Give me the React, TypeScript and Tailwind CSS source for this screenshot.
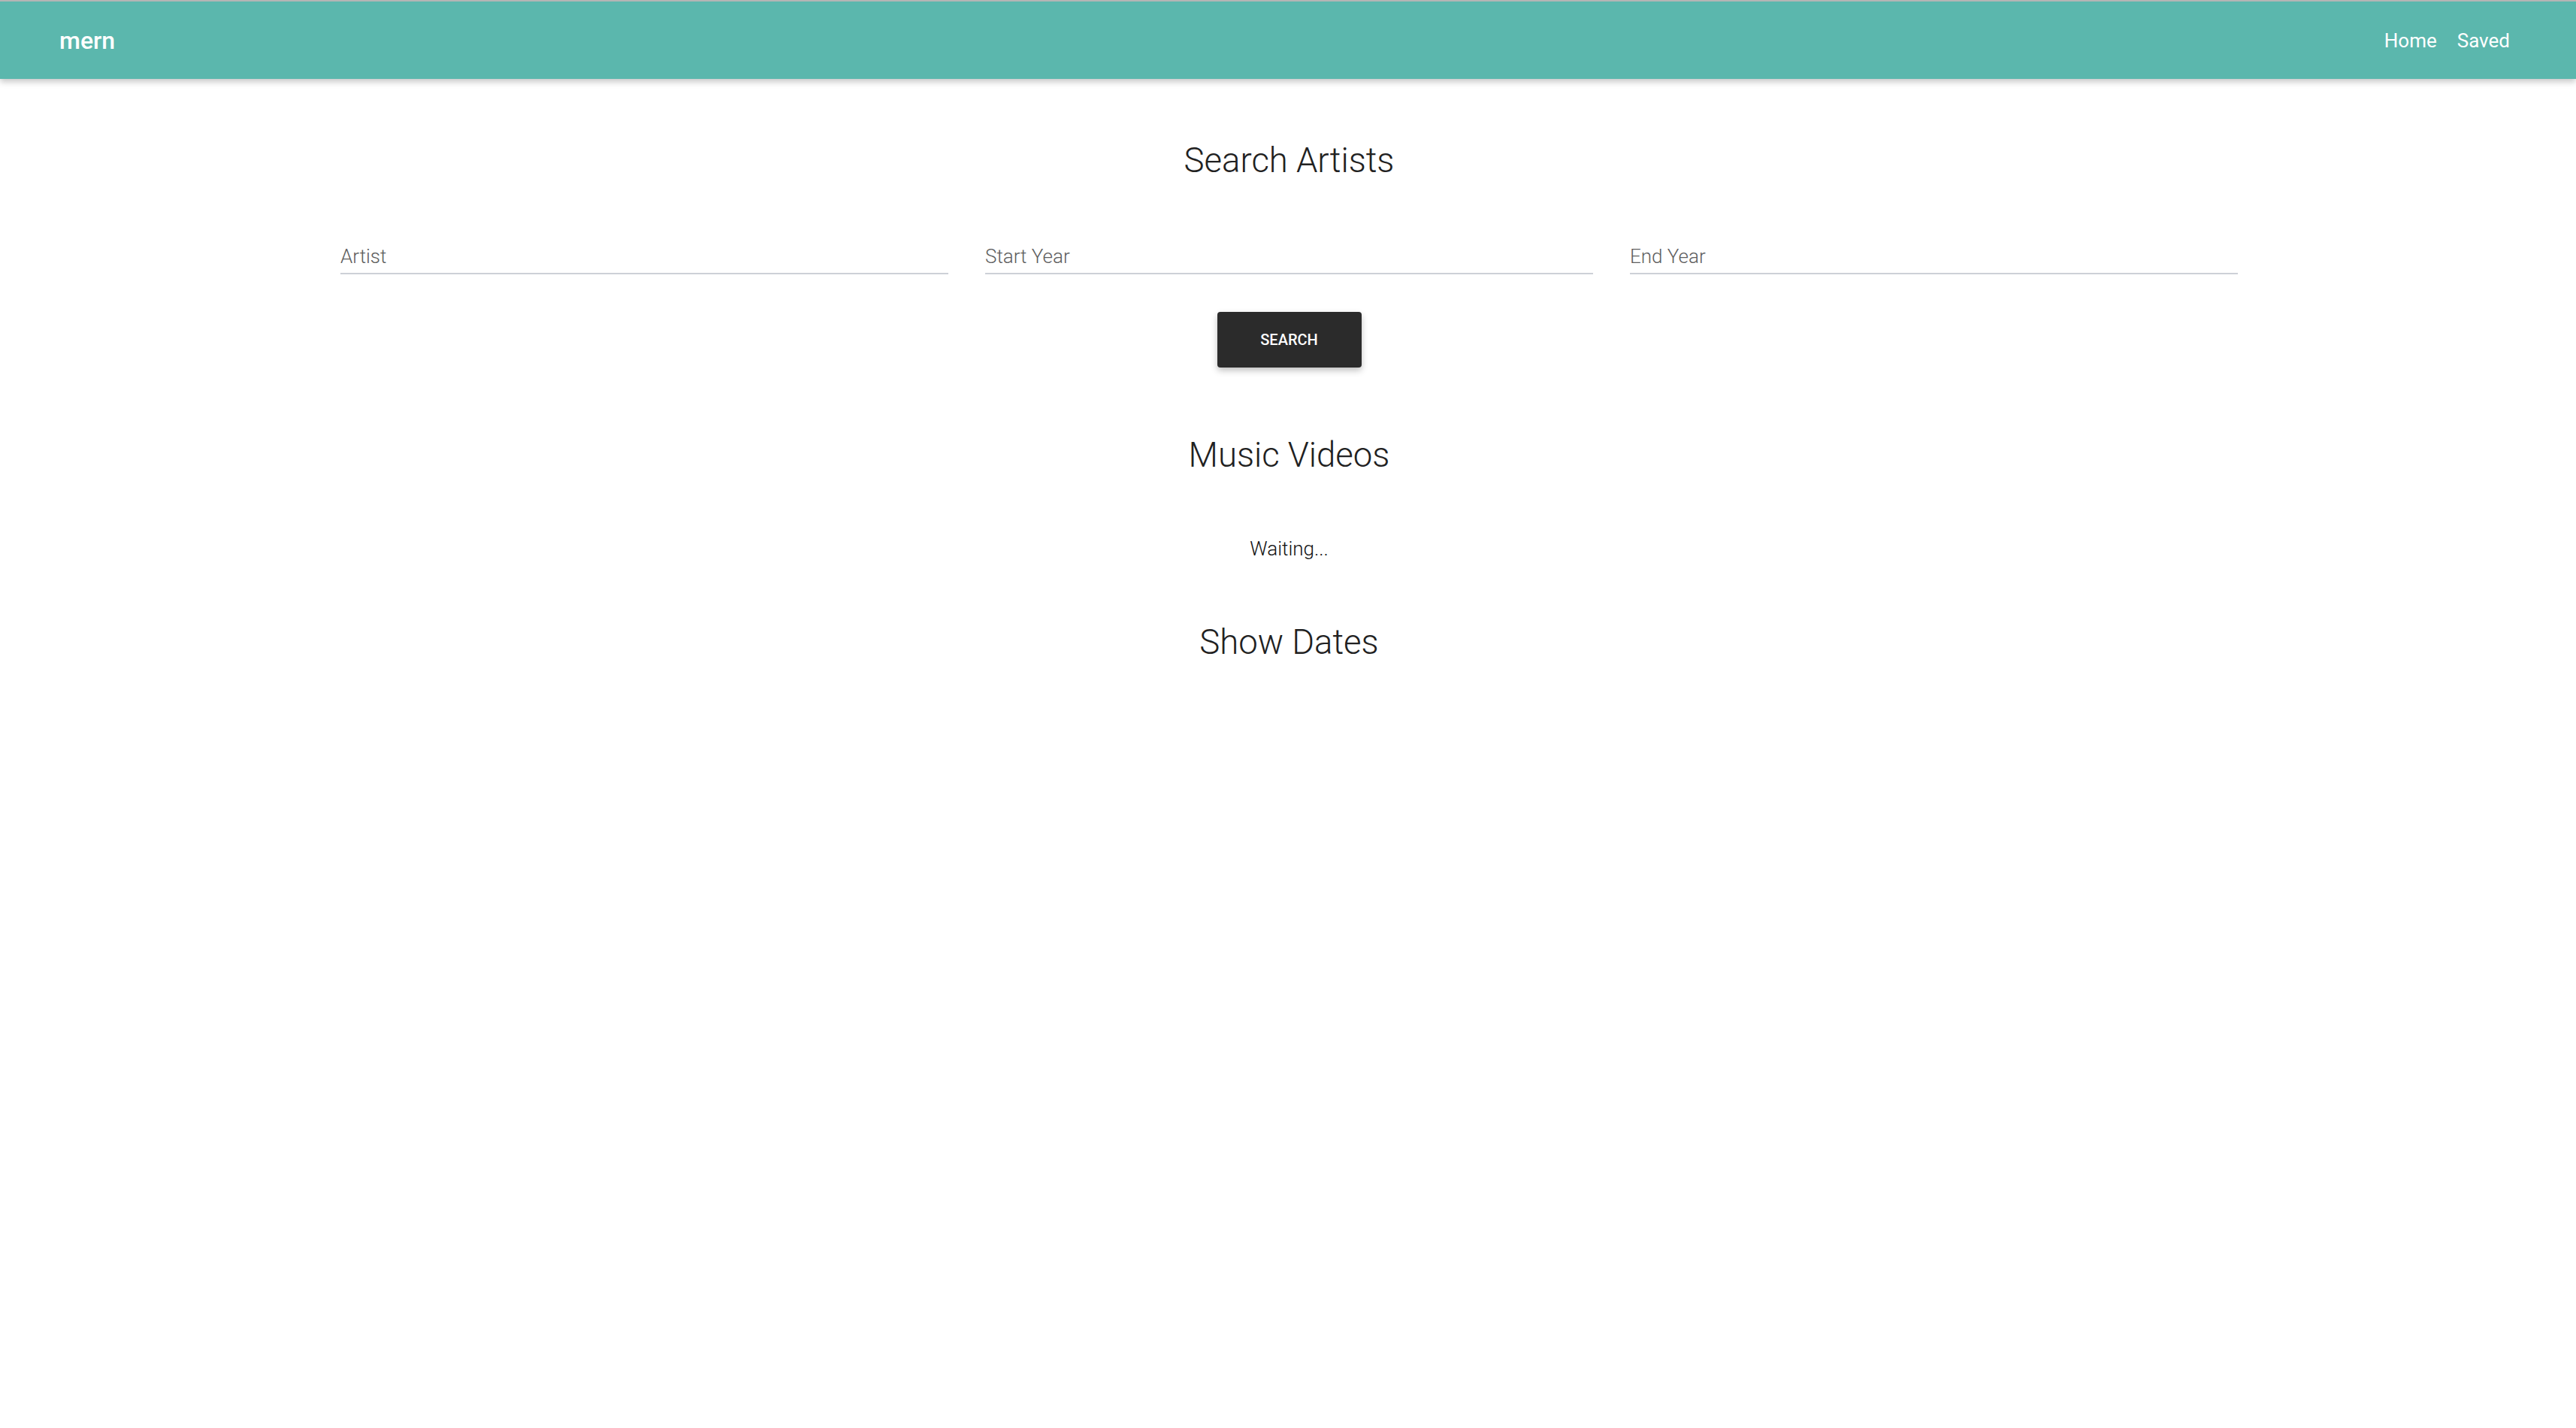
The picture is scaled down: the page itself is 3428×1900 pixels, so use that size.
import React from "react";

export default function App() {
  const fields = ["Artist", "Start Year", "End Year"];
  return (
    <div className="min-h-[1900px] bg-white text-[#212121]" style={{ fontFamily: "Roboto, 'Noto Sans', sans-serif" }}>
      <nav className="h-[105px] border-t-2 border-[#b5b5b5] bg-[#5bb7ad] shadow-[0_4px_8px_rgba(0,0,0,0.22)] flex items-center justify-between pl-[79px] pr-[88px] text-white">
        <div className="text-[32px] leading-[34px] font-medium">mern</div>
        <div className="flex items-center gap-[27px] text-[26px] leading-[26px]">
          <span>Home</span>
          <span>Saved</span>
        </div>
      </nav>

      <main className="flex flex-col items-center pl-[3px]">
        <h1 className="mt-[84px] text-[45.5px] leading-[50px] font-light">Search Artists</h1>

        <div className="mt-[87px] w-[2525px] grid grid-cols-3 gap-[49px]">
          {fields.map((f) => (
            <div key={f} className="border-b-2 border-[#cdd1d7] pb-[7px]">
              <div className="text-[26px] leading-[30px] font-light text-[#5e5e5e]">{f}</div>
            </div>
          ))}
        </div>

        <button className="mt-[50px] w-[192px] h-[74px] rounded-[4px] bg-[#2b2b2b] text-white text-[20px] font-medium shadow-[0_4px_8px_rgba(0,0,0,0.25)] flex items-center justify-center">
          SEARCH
        </button>

        <h2 className="mt-[92px] text-[45.5px] leading-[50px] font-light">Music Videos</h2>

        <p className="mt-[84px] text-[26px] leading-[30px] font-light text-[#111]">Waiting...</p>

        <h2 className="mt-[85px] text-[45.5px] leading-[50px] font-light">Show Dates</h2>
      </main>
    </div>
  );
}
